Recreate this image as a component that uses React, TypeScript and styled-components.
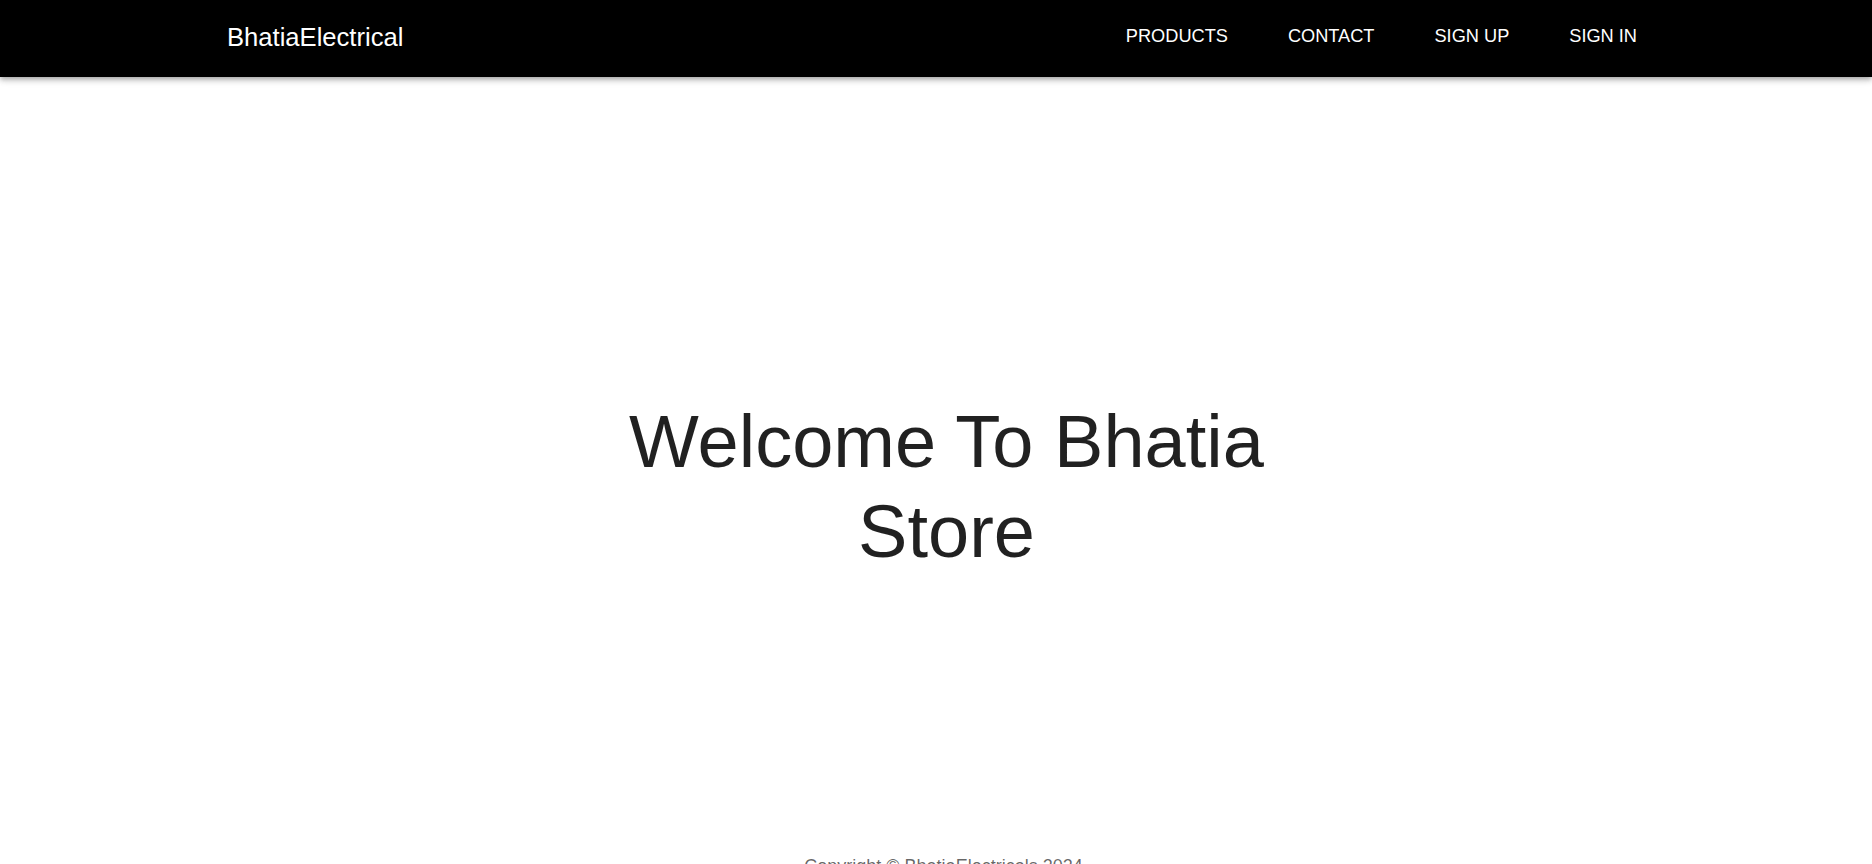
import React from "react";
import styled, { createGlobalStyle } from "styled-components";

const GlobalStyle = createGlobalStyle`
  html, body {
    margin: 0;
    padding: 0;
    background: #ffffff;
    font-family: "Liberation Sans", Arial, sans-serif;
  }
  * { box-sizing: border-box; }
`;

const Page = styled.div`
  display: flex;
  flex-direction: column;
  width: 100%;
`;

const Header = styled.header`
  position: relative;
  z-index: 2;
  height: 77px;
  background: #000000;
  color: #ffffff;
  display: flex;
  align-items: center;
  justify-content: space-between;
  padding: 0 235px 0 227px;
  box-shadow: 0px 2px 4px -1px rgba(0, 0, 0, 0.2),
    0px 4px 5px 0px rgba(0, 0, 0, 0.14), 0px 1px 10px 0px rgba(0, 0, 0, 0.12);
`;

const Logo = styled.a`
  font-size: 25.6px;
  line-height: 1;
  color: #ffffff;
  text-decoration: none;
  margin-top: -1px;
`;

const Nav = styled.nav`
  display: flex;
  align-items: center;
  gap: 60px;
  margin-top: -4px;
`;

const NavLink = styled.a`
  font-size: 18.2px;
  line-height: 1;
  color: #ffffff;
  text-decoration: none;
  text-transform: uppercase;
`;

const Main = styled.main`
  display: flex;
  justify-content: center;
  padding: 320px 0 279px 21px;
`;

const Heading = styled.h1`
  margin: 0;
  max-width: 720px;
  text-align: center;
  font-weight: 400;
  font-size: 74px;
  line-height: 90px;
  color: rgba(0, 0, 0, 0.87);
`;

const Footer = styled.footer`
  display: flex;
  justify-content: center;
  padding: 0 0 24px 20px;
`;

const Copy = styled.p`
  margin: 0;
  font-size: 18px;
  line-height: 1.15;
  color: rgba(0, 0, 0, 0.6);
`;

const CopyLink = styled.a`
  color: inherit;
  text-decoration: none;
`;

export default function App() {
  return (
    <>
      <GlobalStyle />
      <Page>
        <Header>
          <Logo href="#">BhatiaElectrical</Logo>
          <Nav>
            <NavLink href="#">Products</NavLink>
            <NavLink href="#">Contact</NavLink>
            <NavLink href="#">Sign Up</NavLink>
            <NavLink href="#">Sign In</NavLink>
          </Nav>
        </Header>
        <Main>
          <Heading>Welcome To Bhatia Store</Heading>
        </Main>
        <Footer>
          <Copy>
            Copyright © <CopyLink href="#">BhatiaElectricals</CopyLink> 2024.
          </Copy>
        </Footer>
      </Page>
    </>
  );
}
